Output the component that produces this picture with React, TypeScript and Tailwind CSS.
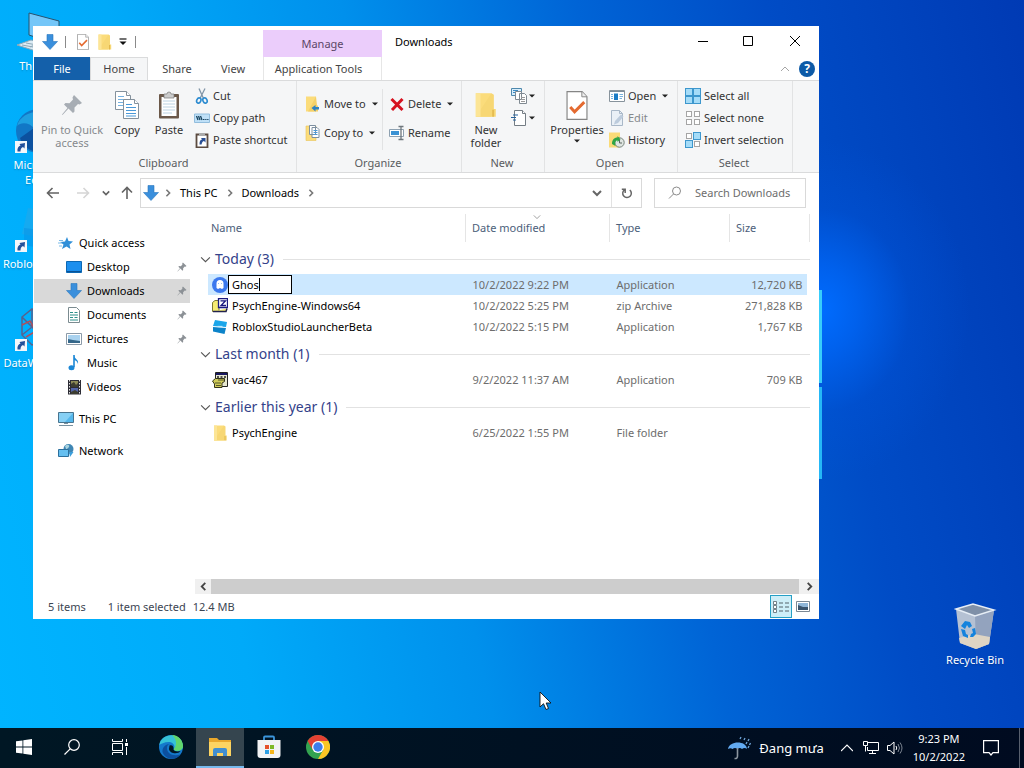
import { ReactNode } from "react";
import clsx from "clsx";

type IconProps = { className?: string };

/* ---------- shared glyphs ---------- */

function Caret({ className }: IconProps) {
  return (
    <svg className={clsx("h-[4px] w-[6px] shrink-0", className)} viewBox="0 0 6 4">
      <path d="M0 .5h6L3 3.5z" fill="#222" />
    </svg>
  );
}

function Chevron({ className, dir = "down" }: IconProps & { dir?: "down" | "up" | "left" | "right" }) {
  const paths = {
    down: "M1 3l4 4 4-4",
    up: "M1 7l4-4 4 4",
    left: "M7 1L3 5l4 4",
    right: "M3 1l4 4-4 4",
  };
  return (
    <svg className={clsx("shrink-0", className)} viewBox="0 0 10 10" fill="none" stroke="currentColor">
      <path d={paths[dir]} />
    </svg>
  );
}

function DownloadArrow({ className }: IconProps) {
  return (
    <svg className={clsx("h-4 w-4 shrink-0", className)} viewBox="0 0 16 16">
      <path d="M5 .5h6v7h4.500L8 15.500.5 7.500H5z" fill="#3a8fdc" stroke="#2a77be" strokeWidth=".6" />
    </svg>
  );
}

function FolderIcon({ className }: IconProps) {
  return (
    <svg className={clsx("shrink-0", className)} viewBox="0 0 14 16">
      <path d="M.5.5h10v15H.5z" fill="#fbdc7b" />
      <path d="M10.500.5l1.500 1v9h1.200v5H.5z" fill="#f7d774" />
      <path d="M.5.5h3v15h-3z" fill="#fce596" />
      <path d="M11.500 11v4.500" stroke="#e2b84c" />
    </svg>
  );
}

function Pin({ className }: IconProps) {
  return (
    <svg className={clsx("shrink-0", className)} viewBox="0 0 22 22" fill="currentColor">
      <path d="M13 1l8 8-2.500 1.500-1.500-.5-3.500 3.500v4L12 19l-4.500-4.500L1.500 21 1 20.500l5.500-6.500L3 10.500 4.500 9l4 .2L12 5.500 11.500 3.500z" />
    </svg>
  );
}

function CheckPage({ className }: IconProps) {
  return (
    <svg className={clsx("shrink-0", className)} viewBox="0 0 22 30">
      <path d="M.7.700h15.500L21.300 6v23.300H.7z" fill="#fff" stroke="#858585" strokeWidth="1.200" />
      <path d="M16 .7V6h5.300" fill="#eee" stroke="#858585" strokeWidth="1" />
      <path d="M4 16.500l4.500 5 10-10" fill="none" stroke="#e46a30" strokeWidth="3" />
    </svg>
  );
}

/* ---------- ribbon icons ---------- */

function CopyIcon() {
  return (
    <svg className="h-7 w-6" viewBox="0 0 24 28" fill="#fff" stroke="#84919c">
      <path d="M.5.5h11l4 4v14H.5z" />
      <path d="M11.500.5v4h4" />
      <path d="M3 5.500h6M3 8.500h10M3 11.500h10M3 14.500h10" stroke="#75b1e0" />
      <path d="M8.500 8.500h11l4 4v15h-15z" />
      <path d="M19.500 8.500v4h4" />
      <path d="M11 13.500h6M11 16.500h10M11 19.500h10M11 22.500h10M11 25h10" stroke="#4b99d8" />
    </svg>
  );
}

function PasteIcon() {
  return (
    <svg className="h-7 w-[22px]" viewBox="0 0 22 28">
      <rect x="1" y="3" width="20" height="24.500" rx="1" fill="#6b5849" />
      <path d="M3.500 6h15v19h-15z" fill="#fff" />
      <path d="M5 10h12M5 13h12M5 16h12M5 19h12M5 22h9" stroke="#bcd3e2" />
      <path d="M6 3h3a2 2 0 0 1 4 0h3v4H6z" fill="#ccc" stroke="#777" strokeWidth=".7" />
    </svg>
  );
}

function CutIcon() {
  return (
    <svg className="h-4 w-4" viewBox="0 0 16 16" fill="none">
      <path d="M5 .5l4.500 10M11 .5L6 10.500" stroke="#8296a8" strokeWidth="1.300" />
      <ellipse cx="4.800" cy="12.500" rx="2" ry="2.700" stroke="#2c8bd0" strokeWidth="1.600" transform="rotate(25 4.800 12.500)" />
      <ellipse cx="11" cy="12.500" rx="2" ry="2.700" stroke="#2c8bd0" strokeWidth="1.600" transform="rotate(-25 11 12.500)" />
    </svg>
  );
}

function CopyPathIcon() {
  return (
    <svg className="h-4 w-4" viewBox="0 0 16 16" fill="none">
      <path d="M.5 4h15v8.500H.5z" fill="#bfe0f7" stroke="#92bddd" />
      <path d="M2.500 6l1.500 4M4.500 6L6 10M6.500 6L8 10" stroke="#17435f" strokeWidth="1.300" />
      <path d="M9 9.500h1.500M11.200 9.500h1.300M13.200 9.500h1.300" stroke="#17435f" />
    </svg>
  );
}

function PasteShortcutIcon() {
  return (
    <svg className="h-4 w-4" viewBox="0 0 16 16">
      <path d="M2.500 2.500h11v13h-11z" fill="#fff" stroke="#5c4b40" strokeWidth="1.800" />
      <path d="M5 1h6v3H5z" fill="#aaa" />
      <path d="M5.500 12.500c0-3 .5-4.500 2.500-5L7 6h4.500v4.500L10 9c-2 .5-2 2-2.500 3.500z" fill="#2a4f94" />
    </svg>
  );
}

function MoveToIcon() {
  return (
    <svg className="h-4 w-4" viewBox="0 0 16 16">
      <path d="M1 .5h10v15H1z" fill="#fbdc7b" />
      <path d="M11 .5l1 9h1v6H3z" fill="#f5d067" />
      <path d="M6.500 12l4-3v2H14v2.500h-3.500v2z" fill="#2d82c4" />
    </svg>
  );
}

function CopyToIcon() {
  return (
    <svg className="h-4 w-4" viewBox="0 0 16 16">
      <path d="M1 1h10v14.500H1z" fill="#fbdc7b" stroke="#e9c556" strokeWidth=".6" />
      <path d="M4.500.5h6v9h-6zM7 2.500h5l2 2v8H7z" fill="#fff" stroke="#7d8fa0" />
      <path d="M8.500 5.500h4M8.500 7.500h4M8.500 9.500h4" stroke="#4b99d8" />
    </svg>
  );
}

function DeleteIcon() {
  return (
    <svg className="h-4 w-4" viewBox="0 0 16 16">
      <path d="M2.500 3l11 11M13.500 3L3 14" stroke="#d6121f" strokeWidth="3" />
    </svg>
  );
}

function RenameIcon() {
  return (
    <svg className="h-4 w-4" viewBox="0 0 16 16" fill="none">
      <path d="M.5 4.500h14v7H.5z" fill="#fff" stroke="#8ea1b1" />
      <path d="M2 6h8v4H2z" fill="#3a92d4" />
      <path d="M9.500 1.500h5M9.500 14.500h5M12 1.500v13" stroke="#6f777d" strokeWidth="1.300" />
    </svg>
  );
}

function NewItemIcon() {
  return (
    <svg className="h-4 w-4" viewBox="0 0 16 16" fill="#fff" stroke="#808a92">
      <path d="M.5.5h10v7H.5z" fill="#d9eefb" stroke="#4d88ad" />
      <path d="M2 2.500h5M2 4.500h3" stroke="#3a8ac4" />
      <path d="M4.500 3.500h6v8h-6zM8.500 5.500h5l2 2v8h-7z" />
      <path d="M10 9.500h4M10 11.500h4M10 13.500h4" stroke="#999" />
    </svg>
  );
}

function EasyAccessIcon() {
  return (
    <svg className="h-4 w-4" viewBox="0 0 16 16" fill="#fff" stroke="#747d84">
      <path d="M3.500.5h8l3 3v12h-11z" />
      <path d="M11.500.5v3h3" />
      <path d="M2 5h5M0 7.500h5M2 10h3" stroke="#27639c" strokeWidth="1.200" />
    </svg>
  );
}

function OpenIcon() {
  return (
    <svg className="h-4 w-4" viewBox="0 0 16 16" fill="none">
      <path d="M.5 2.500h15v11H.5z" fill="#fff" stroke="#87939c" />
      <path d="M1 3.500h14" stroke="#7c8c98" />
      <path d="M5 5.500h4v6.500H5z" fill="#1b7cc5" />
      <path d="M2 6.500h2M2 8.500h2M2 10.500h2M10.500 6.500H14M10.500 8.500H14M10.500 10.500H13" stroke="#79b3dd" />
    </svg>
  );
}

function EditIcon() {
  return (
    <svg className="h-4 w-4" viewBox="0 0 16 16">
      <path d="M2.500.5h8l3 3v12h-11z" fill="#eaf0f6" stroke="#a9b8c8" />
      <path d="M10.500.5v3h3" fill="none" stroke="#a9b8c8" />
      <path d="M6 11l6-6.500 2.500 2L9 13l-4 1.500z" fill="#bccbdc" />
    </svg>
  );
}

function HistoryIcon() {
  return (
    <svg className="h-4 w-4" viewBox="0 0 16 16">
      <path d="M0 .5h11v15H0z" fill="#fadb78" />
      <circle cx="10.500" cy="10.500" r="4.700" fill="#dfe5e1" stroke="#77837c" />
      <path d="M10.500 8v3h2.500" fill="none" stroke="#5a6761" />
      <path d="M3 12c0-4 2-6.500 5.500-6.500V4l3 3.200-3 2.800V8.500C6 8.500 6 11 6.500 14z" fill="#2fa545" />
    </svg>
  );
}

function SelectIcon({ kind }: { kind: "all" | "none" | "invert" }) {
  const on = { fill: "#a5dcf8", stroke: "#3d97cd" };
  const off = { fill: "#fff", stroke: "#a5a5a5" };
  const cells: [number, number, boolean][] = [
    [0, 0, kind === "all"],
    [8, 0, kind !== "none"],
    [0, 8, kind !== "none"],
    [8, 8, kind === "all"],
  ];
  return (
    <svg className="h-4 w-4" viewBox="0 0 16 16">
      {cells.map(([x, y, sel]) =>
        sel ? (
          <rect key={`${x}-${y}`} x={x + 0.5} y={y + 0.5} width="7" height="7" {...on} />
        ) : (
          <rect key={`${x}-${y}`} x={x + 1.5} y={y + 1.5} width="5" height="5" {...off} />
        ),
      )}
    </svg>
  );
}

/* ---------- ribbon ---------- */

function BigButton({ icon, children, className }: { icon: ReactNode; children: ReactNode; className?: string }) {
  return (
    <button className={clsx("flex flex-col items-center gap-1 leading-[13px]", className)}>
      <span className="flex h-7 items-center">{icon}</span>
      <span>{children}</span>
    </button>
  );
}

function SmallButton({ icon, label, caret, muted }: { icon: ReactNode; label: string; caret?: boolean; muted?: boolean }) {
  return (
    <button className={clsx("flex h-[22px] items-center gap-[3px] whitespace-nowrap", muted && "text-[#85898d]")}>
      {icon}
      <span>{label}</span>
      {caret && <Caret className="ml-[3px]" />}
    </button>
  );
}

function Group({ label, className, children }: { label: string; className: string; children: ReactNode }) {
  return (
    <div className={clsx("flex shrink-0 flex-col border-r border-[#e2e3e4]", className)}>
      <div className="flex h-[73px] pt-1">{children}</div>
      <div className="pr-[2px] text-center leading-[17px] text-[#5a5c5e]">{label}</div>
    </div>
  );
}

function Ribbon() {
  return (
    <div className="flex h-[93px] shrink-0 overflow-hidden border-y border-[#dadbdc] bg-[#f5f6f7] text-[#333]">
      <Group label="Clipboard" className="w-[264px]">
        <BigButton className="ml-[6px] w-[66px] pt-[6px] text-[#85898d]" icon={<Pin className="h-[22px] w-[22px] text-[#a7adb4]" />}>
          Pin to Quick access
        </BigButton>
        <BigButton className="ml-px w-[42px] pt-[6px]" icon={<CopyIcon />}>
          Copy
        </BigButton>
        <BigButton className="w-[42px] pt-[6px]" icon={<PasteIcon />}>
          Paste
        </BigButton>
        <div className="ml-1 flex flex-col">
          <SmallButton icon={<CutIcon />} label="Cut" />
          <SmallButton icon={<CopyPathIcon />} label="Copy path" />
          <SmallButton icon={<PasteShortcutIcon />} label="Paste shortcut" />
        </div>
      </Group>
      <Group label="Organize" className="w-[165px]">
        <div className="flex w-[85px] flex-col gap-[7px] pt-2 pl-2">
          <SmallButton icon={<MoveToIcon />} label="Move to" caret />
          <SmallButton icon={<CopyToIcon />} label="Copy to" caret />
        </div>
        <div className="my-1 flex flex-col gap-[7px] border-l border-[#e2e3e4] pt-1 pl-[6px]">
          <SmallButton icon={<DeleteIcon />} label="Delete" caret />
          <SmallButton icon={<RenameIcon />} label="Rename" />
        </div>
      </Group>
      <Group label="New" className="w-[83px]">
        <BigButton className="ml-[3px] w-[42px] pt-[6px]" icon={<FolderIcon className="h-[28px] w-[22px]" />}>
          New folder
        </BigButton>
        <div className="ml-1 flex flex-col">
          <button aria-label="New item" className="flex h-[22px] items-center gap-[2px]">
            <NewItemIcon />
            <Caret />
          </button>
          <button aria-label="Easy access" className="flex h-[22px] items-center gap-[2px]">
            <EasyAccessIcon />
            <Caret />
          </button>
        </div>
      </Group>
      <Group label="Open" className="w-[133px]">
        <BigButton className="ml-[3px] w-[58px] pt-[6px]" icon={<CheckPage className="h-[29px] w-[22px]" />}>
          Properties
          <Caret className="mx-auto mt-[3px] block" />
        </BigButton>
        <div className="ml-[3px] flex flex-col">
          <SmallButton icon={<OpenIcon />} label="Open" caret />
          <SmallButton icon={<EditIcon />} label="Edit" muted />
          <SmallButton icon={<HistoryIcon />} label="History" />
        </div>
      </Group>
      <Group label="Select" className="w-[115px]">
        <div className="ml-[7px] flex flex-col">
          <SmallButton icon={<SelectIcon kind="all" />} label="Select all" />
          <SmallButton icon={<SelectIcon kind="none" />} label="Select none" />
          <SmallButton icon={<SelectIcon kind="invert" />} label="Invert selection" />
        </div>
      </Group>
    </div>
  );
}

/* ---------- window header ---------- */

function TitleBar() {
  return (
    <div className="flex h-[31px] shrink-0 items-start">
      <div className="flex h-[31px] w-[230px] shrink-0 items-center pl-[9px]">
        <DownloadArrow />
        <span className="ml-[7px] h-3 w-px bg-[#8a8a8a]" />
        <button aria-label="Properties" className="ml-[11px]">
          <CheckPage className="h-4 w-3" />
        </button>
        <button aria-label="New folder" className="ml-[9px]">
          <FolderIcon className="h-4 w-[14px]" />
        </button>
        <button aria-label="Customize toolbar" className="ml-[7px]">
          <svg className="h-2 w-2" viewBox="0 0 8 8">
            <path d="M.5 1h7" stroke="#111" strokeWidth="1.200" />
            <path d="M.5 3.500h7L4 7z" fill="#111" />
          </svg>
        </button>
        <span className="ml-2 h-3 w-px bg-[#8a8a8a]" />
      </div>
      <div className="mt-1 flex h-[27px] w-[119px] shrink-0 items-center justify-center bg-[#ebcdfb] text-[#5b4666]">Manage</div>
      <h1 className="flex h-[31px] flex-1 items-center pl-[13px] text-black">Downloads</h1>
      <button aria-label="Minimize" className="flex h-[30px] w-11 items-center justify-center">
        <svg className="h-[10px] w-[10px]" viewBox="0 0 10 10" stroke="#000">
          <path d="M0 5.500h10" />
        </svg>
      </button>
      <button aria-label="Maximize" className="flex h-[30px] w-[46px] items-center justify-center">
        <svg className="h-[10px] w-[10px]" viewBox="0 0 10 10" fill="none" stroke="#000">
          <path d="M.5.5h9v9h-9z" />
        </svg>
      </button>
      <button aria-label="Close" className="flex h-[30px] w-12 items-center justify-center">
        <svg className="h-[10px] w-[10px]" viewBox="0 0 10 10" stroke="#000">
          <path d="M0 0l10 10M10 0L0 10" />
        </svg>
      </button>
    </div>
  );
}

function TabRow() {
  return (
    <div className="flex h-[23px] shrink-0 text-[#444]">
      <button className="ml-px w-[56px] bg-[#1460aa] text-white">File</button>
      <button className="-mb-px w-[58px] border border-b-0 border-[#dadbdc] bg-[#f5f6f7] pb-[2px]">Home</button>
      <button className="w-[58px]">Share</button>
      <button className="w-[54px]">View</button>
      <button className="ml-[3px] w-[119px] border-x border-[#e6e6e6] pr-2">Application Tools</button>
      <div className="flex flex-1 items-center justify-end gap-[9px] pr-1">
        <Chevron dir="up" className="h-[10px] w-[10px] text-[#a5a5a5]" />
        <button aria-label="Help" className="h-4 w-4 rounded-full bg-[#0d5aa7] text-[12px] leading-4 font-bold text-white">
          ?
        </button>
      </div>
    </div>
  );
}

function Arrow({ dir, className }: IconProps & { dir: "left" | "right" | "up" }) {
  const paths = {
    left: "M13 7H1.500M6.500 2l-5 5 5 5",
    right: "M1 7h11.500M7.500 2l5 5-5 5",
    up: "M7 13V2M2 6.500l5-5 5 5",
  };
  return (
    <svg className={clsx("h-[14px] w-[14px] shrink-0", className)} viewBox="0 0 14 14" fill="none" stroke="currentColor" strokeWidth="1.600">
      <path d={paths[dir]} />
    </svg>
  );
}

function AddressRow() {
  return (
    <div className="flex shrink-0 items-center pt-[5px] pr-[13px] text-black">
      <nav className="flex w-[107px] shrink-0 items-center pl-[13px] text-[#636363]">
        <button aria-label="Back" className="text-[#636363]"><Arrow dir="left" /></button>
        <button aria-label="Forward" className="ml-4 text-[#d5d5d5]"><Arrow dir="right" /></button>
        <button aria-label="Recent locations" className="ml-3 text-[#636363]"><Chevron className="h-2 w-2 stroke-2" /></button>
        <button aria-label="Up" className="ml-[10px] text-[#636363]"><Arrow dir="up" /></button>
      </nav>
      <div className="flex h-[30px] flex-1 items-center border border-[#d9d9d9] pl-[2px]">
        <DownloadArrow />
        <Chevron dir="right" className="ml-[5px] h-2 w-2 stroke-2 text-[#777]" />
        <a href="#this-pc" className="ml-2">This PC</a>
        <Chevron dir="right" className="ml-2 h-2 w-2 stroke-2 text-[#777]" />
        <a href="#downloads" className="ml-2">Downloads</a>
        <Chevron dir="right" className="ml-2 h-2 w-2 stroke-2 text-[#777]" />
        <button aria-label="Previous locations" className="mr-[9px] ml-auto">
          <Chevron className="h-[10px] w-[10px] stroke-2 text-[#666]" />
        </button>
        <button aria-label="Refresh" className="flex h-full w-[30px] items-center justify-center border-l border-[#e2e2e2]">
          <svg className="h-3 w-3" viewBox="0 0 12 12" fill="none" stroke="#666" strokeWidth="1.500">
            <path d="M8.800 3A4.300 4.300 0 1 1 3.500 2.800M.8 2.300h3.400V6" />
          </svg>
        </button>
      </div>
      <label className="ml-3 flex h-[30px] w-[152px] shrink-0 items-center border border-[#d9d9d9] pl-[13px]">
        <svg className="h-[14px] w-[14px] shrink-0" viewBox="0 0 14 14" fill="none" stroke="#8a8a8a">
          <circle cx="8.500" cy="5" r="4" />
          <path d="M5.500 8L1 12.500" />
        </svg>
        <input
          aria-label="Search Downloads"
          placeholder="Search Downloads"
          className="ml-[13px] w-full min-w-0 outline-none placeholder:text-[#6d6d6d] placeholder:opacity-100"
        />
      </label>
    </div>
  );
}

/* ---------- sidebar ---------- */

const sideIcons: Record<string, ReactNode> = {
  "Quick access": (
    <>
      <path d="M9 2l1.500 4 4.500.5-3.500 3 1 4.500-4-2.500L4 14l1.500-4.500L2 7l5-.5z" fill="#2f8fd8" />
      <path d="M1 5.500h4M0 8h4M1 11h3" stroke="#7bbbe8" />
    </>
  ),
  Desktop: (
    <>
      <path d="M.5 2.500h15v11H.5z" fill="#1c8fee" stroke="#0c68b4" />
      <path d="M1 12.500h14" stroke="#0a5296" />
    </>
  ),
  Documents: (
    <>
      <path d="M2.500.5h8l3 3v12h-11z" fill="#fff" stroke="#7b8b90" />
      <path d="M4 5.500h3M8.500 5.500h3M4 8h8M4 10.500h3M8.500 10.500h3M4 13h8" stroke="#2c8f8a" />
    </>
  ),
  Pictures: (
    <>
      <path d="M.5 2.500h15v11H.5z" fill="#fff" stroke="#8b9aa8" />
      <path d="M2 4h12v8H2z" fill="#a9d2ef" />
      <path d="M2 8l5 1 7 1v2H2z" fill="#35678a" />
    </>
  ),
  Music: (
    <>
      <path d="M8 0v12" stroke="#1b87d6" strokeWidth="1.600" />
      <ellipse cx="5.500" cy="12.700" rx="3" ry="2.500" fill="#1b87d6" />
      <path d="M8 0c0 4 5 4 4 9-.5-2.500-2-3.500-4-4z" fill="#1b87d6" />
    </>
  ),
  Videos: (
    <>
      <path d="M2 1h13v14.500H2z" fill="#2c2c35" />
      <path d="M5 2h7v6H5z" fill="#8d8b58" />
      <path d="M5 9h7v6H5z" fill="#5264a8" />
      <path d="M5 5l3-2 2 3 2-2v4H5zM5 13l4-2 3 2v2H5z" fill="#3d3d30" />
      <path d="M3.500 1v15M13.500 1v15" stroke="#e6e6e6" strokeDasharray="1.500 1.500" />
    </>
  ),
  "This PC": (
    <>
      <path d="M.5 1.500h15v10H.5z" fill="#54b7ec" stroke="#48748f" />
      <path d="M1 2h14L7 11H1z" fill="#86d0f5" />
      <path d="M1 14.500h14M6 12.500h4" stroke="#78909f" />
    </>
  ),
  Network: (
    <>
      <circle cx="10.500" cy="6" r="5" fill="#3f86b4" />
      <path d="M7 3c3-3 6 0 3 2s1 3-1 4z" fill="#a9d3df" />
      <path d="M.5 6.500h10v7H.5z" fill="#65bff0" stroke="#2c6f9c" />
      <path d="M11 9h4.500L12 14z" fill="#3b9edb" />
    </>
  ),
};

const places = [
  { label: "Quick access", root: true },
  { label: "Desktop", pinned: true },
  { label: "Downloads", pinned: true, active: true },
  { label: "Documents", pinned: true },
  { label: "Pictures", pinned: true },
  { label: "Music" },
  { label: "Videos" },
  { label: "This PC", root: true, spaced: true },
  { label: "Network", root: true, spaced: true },
];

function Sidebar() {
  return (
    <ul className="w-[157px] shrink-0 pt-[23px] pl-px">
      {places.map((p) => (
        <li key={p.label} className={clsx(p.spaced && "mt-2")}>
          <a
            href="#"
            className={clsx("flex h-6 items-center gap-[5px] pr-[3px] text-black", p.root ? "pl-6" : "pl-8", p.active && "bg-[#d9d9d9]")}
          >
            {p.active ? (
              <DownloadArrow />
            ) : (
              <svg className="h-4 w-4 shrink-0" viewBox="0 0 16 16" fill="none">
                {sideIcons[p.label]}
              </svg>
            )}
            <span className="flex-1 whitespace-nowrap">{p.label}</span>
            {p.pinned && <Pin className="h-[10px] w-[10px] text-[#8c9196]" />}
          </a>
        </li>
      ))}
    </ul>
  );
}

/* ---------- file list ---------- */

function FileIcon({ kind }: { kind: string }) {
  if (kind === "folder") return <FolderIcon className="ml-px h-4 w-[15px]" />;
  return (
    <svg className="h-4 w-4 shrink-0" viewBox="0 0 16 16" fill="none">
      {kind === "ghost" && (
        <>
          <circle cx="8" cy="8" r="8" fill="#3b78ee" />
          <path d="M4.500 11V6.500a3.500 3.500 0 0 1 7 0V11l-1.500 1-2-1-2 1z" fill="#fff" />
          <path d="M6.500 6v1M9.500 6v1" stroke="#9dbcf6" />
        </>
      )}
      {kind === "zip" && (
        <>
          <path d="M.5 4.500L3 2.500h4v11H.5z" fill="#f6ec72" stroke="#7d7a30" />
          <path d="M1 13.500h13l1-3" fill="#f6ec72" stroke="#22224e" strokeWidth="1.500" />
          <path d="M6.500.5h9v9h-9z" fill="#fff" stroke="#1a1a80" strokeWidth="1.300" />
          <path d="M8.500 2.800h5L9 7.500h5" stroke="#1a1a80" strokeWidth="1.300" />
        </>
      )}
      {kind === "roblox" && (
        <>
          <path d="M3 1l12 2-1 5L1 7z" fill="#1ba6ea" />
          <path d="M1 8l13 1-1.500 6L1 12.500z" fill="#0c83c9" />
          <path d="M5.500 7.500h5" stroke="#bdeaff" strokeWidth="1.300" />
        </>
      )}
      {kind === "installer" && (
        <>
          <path d="M3.500.5h12v14h-12z" fill="#e6e7d0" stroke="#222" />
          <path d="M4 1h11v2H4z" fill="#181860" />
          <path d="M5 5h2M8.500 5h2M12 5h2" stroke="#222" strokeWidth="1.500" />
          <path d="M.5 9l3-2.500h9v3L10 11v4.500H2.500V12z" fill="#d0cc5a" stroke="#36361c" />
          <path d="M3 11h6M6 8h6M4 13.500h5" stroke="#55562b" />
        </>
      )}
    </svg>
  );
}

const groups = [
  {
    title: "Today (3)",
    files: [
      { name: "Ghos", icon: "ghost", date: "10/2/2022 9:22 PM", type: "Application", size: "12,720 KB", editing: true },
      { name: "PsychEngine-Windows64", icon: "zip", date: "10/2/2022 5:25 PM", type: "zip Archive", size: "271,828 KB" },
      { name: "RobloxStudioLauncherBeta", icon: "roblox", date: "10/2/2022 5:15 PM", type: "Application", size: "1,767 KB" },
    ],
  },
  {
    title: "Last month (1)",
    files: [{ name: "vac467", icon: "installer", date: "9/2/2022 11:37 AM", type: "Application", size: "709 KB" }],
  },
  {
    title: "Earlier this year (1)",
    files: [{ name: "PsychEngine", icon: "folder", date: "6/25/2022 1:55 PM", type: "File folder", size: "" }],
  },
];

function FileTable() {
  return (
    <table className="w-full table-fixed border-collapse text-left text-[#6d6d6d]">
      <colgroup>
        <col className="w-[13px]" />
        <col />
        <col className="w-[144px]" />
        <col className="w-[120px]" />
        <col className="w-[77px]" />
        <col className="w-[3px]" />
      </colgroup>
      <thead>
        <tr className="h-[28px] text-[#4c607a]">
          <td />
          <th className="pl-[3px] font-normal">Name</th>
          <th className="relative border-l border-[#e5e5e5] pl-[6px] font-normal">
            Date modified
            <Chevron className="absolute -top-px left-[67px] h-2 w-2 text-[#888]" />
          </th>
          <th className="border-l border-[#e5e5e5] pl-[6px] font-normal">Type</th>
          <th className="border-l border-[#e5e5e5] pl-[6px] font-normal">Size</th>
          <td className="border-r border-[#e5e5e5]" />
        </tr>
      </thead>
      {groups.map((g) => (
        <tbody key={g.title}>
          <tr className="h-8">
            <th colSpan={6} className="p-0 font-normal">
              <div className="flex items-center pt-[2px] pl-[5px] text-[14px] leading-5 text-[#34428a]">
                <Chevron className="mr-1 h-[11px] w-[11px] text-[#555]" />
                {g.title}
                <span className="ml-[9px] h-px flex-1 bg-[#e2e2e2]" />
              </div>
            </th>
          </tr>
          {g.files.map((f) => (
            <tr key={f.name} className="h-[21px]">
              <td />
              <td className={clsx("p-0", f.editing && "bg-[#cce8ff]")}>
                <div className="flex items-center gap-1 pl-1 whitespace-nowrap text-black">
                  <FileIcon kind={f.icon} />
                  {f.editing ? (
                    <span className="relative -ml-1">
                      <input
                        aria-label="File name"
                        defaultValue={f.name}
                        className="block h-[19px] w-16 border border-black bg-white pl-[3px] caret-transparent outline-none"
                      />
                      <span className="absolute top-[3px] left-[31px] h-[13px] w-px bg-black" />
                    </span>
                  ) : (
                    <span>{f.name}</span>
                  )}
                </div>
              </td>
              <td className={clsx("p-0 pl-[7px]", f.editing && "bg-[#cce8ff]")}>{f.date}</td>
              <td className={clsx("p-0 pl-[7px]", f.editing && "bg-[#cce8ff]")}>{f.type}</td>
              <td className={clsx("p-0 pr-1 text-right whitespace-nowrap", f.editing && "bg-[#cce8ff]")}>{f.size}</td>
              <td />
            </tr>
          ))}
        </tbody>
      ))}
    </table>
  );
}

function ExplorerWindow() {
  return (
    <main className="absolute top-[26px] right-[205px] bottom-[109px] left-[33px] flex flex-col overflow-hidden bg-white">
      <TitleBar />
      <TabRow />
      <Ribbon />
      <AddressRow />
      <div className="flex min-h-0 flex-1">
        <Sidebar />
        <div className="flex min-w-0 flex-1 flex-col pl-[5px]">
          <div className="min-h-0 flex-1 overflow-hidden pt-[6px] pr-[9px]">
            <FileTable />
          </div>
          <div className="flex h-[15px] shrink-0 items-center bg-[#f0f0f0] text-[#444]">
            <button aria-label="Scroll left" className="flex w-4 justify-center">
              <Chevron dir="left" className="h-[9px] w-[9px] stroke-2" />
            </button>
            <span className="h-full flex-1 bg-[#cdcdcd]" />
            <button aria-label="Scroll right" className="flex w-5 justify-center">
              <Chevron dir="right" className="h-[9px] w-[9px] stroke-2" />
            </button>
          </div>
        </div>
      </div>
      <footer className="flex h-[25px] shrink-0 items-center pl-[15px] text-[#3c4552]">
        <span>5 items</span>
        <span className="ml-[22px]">1 item selected</span>
        <span className="ml-[7px]">12.4 MB</span>
        <div className="mr-[9px] ml-auto flex h-full items-center gap-1">
          <button aria-label="Details view" className="flex h-[23px] w-[22px] items-center justify-center border border-[#26a0c6] bg-[#cdeef8]">
            <svg className="h-3 w-4" viewBox="0 0 16 12" fill="none" stroke="#55626b">
              <path d="M.5.500h3v3h-3zM.5 4.500h3v3h-3zM.5 8.500h3v3h-3z" fill="#fff" strokeWidth=".8" />
              <path d="M6 2h4M12 2h4M6 6h4M12 6h4M6 10h4M12 10h4" />
            </svg>
          </button>
          <button aria-label="Thumbnail view">
            <svg className="h-[11px] w-[14px]" viewBox="0 0 14 11">
              <path d="M.5.500h13v10H.5z" fill="#fff" stroke="#7b8894" />
              <path d="M2 2h10v7H2z" fill="#8fb6d8" />
              <path d="M2 4l5 2h5v3H2z" fill="#39536b" />
            </svg>
          </button>
        </div>
      </footer>
    </main>
  );
}

/* ---------- desktop ---------- */

function ShortcutBadge() {
  return (
    <svg className="absolute bottom-[2px] left-[1px] h-3 w-3" viewBox="0 0 12 12">
      <path d="M0 0h12v12H0z" fill="#f4f7fb" />
      <path d="M2.500 10.500c-.5-3.500 1-5.500 3-6L4.500 3 10 2 9.500 7.500 8 6C6 6.500 5.500 8.500 5.500 10.500z" fill="#23509a" />
    </svg>
  );
}

function Shortcut({ label, badge, children }: { label: string; badge?: boolean; children: ReactNode }) {
  return (
    <a href="#" className="flex h-[99px] w-[76px] flex-col items-center gap-[2px] text-center leading-[15px] text-white text-shadow-sm">
      <span className="relative block h-12 w-12">
        <svg className="h-12 w-12" viewBox="0 0 48 48">
          {children}
        </svg>
        {badge && <ShortcutBadge />}
      </span>
      {label}
    </a>
  );
}

function Desktop() {
  return (
    <div className="relative min-h-0 flex-1 overflow-hidden bg-[radial-gradient(ellipse_150px_170px_at_820px_310px,rgb(0_108_255)_0%,rgb(0_104_250/0.75)_25%,rgb(0_90_230/0.25)_60%,rgb(0_80_215/0)_100%),linear-gradient(78deg,#00b4ff_0%,#00aaf9_22%,#0090ec_42%,#0064d6_62%,#004cc6_78%,#003ab4_100%)]">
      <div className="absolute top-[8px] left-0 flex flex-col">
        <Shortcut label="This PC">
          <path d="M15 5l30 8v24l-30-10z" fill="#74c6f8" stroke="#27526f" />
          <path d="M3 37l14-5 22 6-14 6z" fill="#dcebf4" stroke="#8fa9b8" />
          <path d="M8 37l22 4M12 35l22 4M16 39l9-4" stroke="#8fa9b8" />
        </Shortcut>
        <Shortcut label="Microsoft Edge" badge>
          <circle cx="24" cy="24" r="22" fill="#1177c6" />
          <path d="M3 19C7 2 40-3 46 22c-6-12-22-10-25 0-6-7-14-7-18-3z" fill="#1f9fe0" />
          <path d="M20 21c-2 12 5 20 18 18-10 10-28 6-32-8z" fill="#0c519f" />
        </Shortcut>
        <Shortcut label="Roblox Player" badge>
          <path d="M14 2l30 4-4 28-32-6z" fill="#15aaf0" />
          <path d="M10 22l32 4-4 18-28-5z" fill="#0890e4" opacity=".5" />
        </Shortcut>
        <Shortcut label="DataWrapper" badge>
          <g fill="none" stroke="#56638f" strokeWidth="1.500">
            <path d="M8 12l10-8 12 8 10 10-8 14-14 4-10-10zM8 12l10 10 12-10M18 22l-10 8M18 22l14 14M18 4v18" />
            <path d="M8 20l8-4 6 10 14-2M12 32l10-6 6 10" stroke="#b0505c" />
          </g>
        </Shortcut>
      </div>
      {/* light beam of the wallpaper's window pane */}
      <div className="absolute top-[290px] left-[819px] h-[93px] w-[3px] bg-[#38cdfa]" />
      <div className="absolute top-[387px] left-[819px] h-[92px] w-[3px] bg-[#25b8f6]" />
      <ExplorerWindow />
      <a
        href="#"
        className="absolute right-[11px] bottom-[61px] flex w-[76px] flex-col items-center gap-[2px] leading-[15px] whitespace-nowrap text-white text-shadow-sm"
      >
        <svg className="h-12 w-12" viewBox="0 0 48 48">
          <path d="M5 7l4 34 16 6 13-5 5-34-19 5z" fill="#b5c1d3" />
          <path d="M24 13l1 34 13-5 5-34z" fill="#93a3be" />
          <path d="M8 36l15-4 16 3-1 7-13 5-16-6z" fill="#dfd5c4" />
          <path d="M5 7l17-5 21 6-19 6z" fill="#7f90a8" stroke="#e6edf5" strokeWidth="1.500" />
          <path d="M10 24l4-5 5 1 2 4-3 2-2-3-2 4zM10 27l4 1 1 4 2 1v3l-5-2zM19 35l1-3 2-1-1-4 3-1 1 6-3 3z" fill="#1583dd" />
        </svg>
        Recycle Bin
      </a>
      <svg className="absolute top-[691px] left-[539px] h-[20px] w-[13px]" viewBox="0 0 13 20">
        <path d="M1 1v15l3.500-3.300L7 18.500l2.500-1L7.200 12H12z" fill="#fff" stroke="#111" strokeWidth=".9" />
      </svg>
    </div>
  );
}

/* ---------- taskbar ---------- */

function TaskButton({ label, active, children }: { label: string; active?: boolean; children: ReactNode }) {
  return (
    <button
      aria-label={label}
      className={clsx("flex h-10 w-12 items-center justify-center border-b-2", active ? "border-[#76b9ed] bg-[#35454f]" : "border-transparent")}
    >
      {children}
    </button>
  );
}

function Taskbar() {
  return (
    <footer className="flex h-10 shrink-0 items-center bg-linear-to-r from-[#001724] to-[#000b20] text-white">
      <TaskButton label="Start">
        <svg className="h-4 w-4" viewBox="0 0 16 16" fill="#fff">
          <path d="M0 2.300l6.500-.9v6.200H0zM7.300 1.300L16 0v7.600H7.300zM0 8.400h6.500v6.200L0 13.700zM7.300 8.400H16V16l-8.700-1.300z" />
        </svg>
      </TaskButton>
      <TaskButton label="Search">
        <svg className="h-4 w-4" viewBox="0 0 16 16" fill="none" stroke="#fff" strokeWidth="1.200">
          <circle cx="10" cy="6" r="5.300" />
          <path d="M6.200 9.800L.5 15.500" />
        </svg>
      </TaskButton>
      <TaskButton label="Task View">
        <svg className="h-4 w-4" viewBox="0 0 16 16" fill="none" stroke="#fff">
          <path d="M.5 0v2.500h10V0M.5 16v-2.500h10V16M.5 4.500h10v7H.5zM14.500 0v3M14.500 8v8" />
          <path d="M13 4h3v3h-3z" fill="#fff" stroke="none" />
        </svg>
      </TaskButton>
      <div className="ml-[3px] flex gap-px">
        <TaskButton label="Microsoft Edge">
          <svg className="h-6 w-6" viewBox="0 0 24 24">
            <circle cx="12" cy="12" r="12" fill="#1479cc" />
            <path d="M.3 10C2-2 22-4 24 11c0 5-7 6-9.500 3.500C17 11 14 7 10 7 5 7 2 9 .3 10z" fill="#36c2d7" />
            <path d="M13 0c7 0 11 6 11 11 0 5-7 6-9.500 3.500C19 10 17 3 13 0z" fill="#61d66c" />
            <path d="M8 13c0 6 6 8.500 13.500 6.500C17 26 6 25 3.500 17 3 12 7 9 11 9c-2 0-3 2-3 4z" fill="#0c4f9e" />
            <path d="M10.500 10.500c3-1 4.500 1.500 4 4 1 2.500 5 2 7 1.500-2 3.500-11 3-11.500-2z" fill="#001724" />
          </svg>
        </TaskButton>
        <TaskButton label="File Explorer" active>
          <svg className="h-5 w-6" viewBox="0 0 24 20">
            <path d="M1 1h8l2 2h12v4H1z" fill="#e9a82c" />
            <path d="M1 5h22v14H1z" fill="#fcd462" />
            <path d="M5 19v-6q0-2 2-2h10q2 0 2 2v6h-4v-3H9v3z" fill="#418fd0" />
          </svg>
        </TaskButton>
        <TaskButton label="Microsoft Store">
          <svg className="h-6 w-6" viewBox="0 0 24 24">
            <path d="M7 6V2.500Q7 1.500 8 1.500h8q1 0 1 1V6" fill="none" stroke="#3b95dc" strokeWidth="1.800" />
            <path d="M.5 5h23v15q0 3-3 3h-17q-3 0-3-3z" fill="#f1f3f5" />
            <path d="M8 10h4v4H8z" fill="#e5512b" />
            <path d="M13 10h4v4h-4z" fill="#7db928" />
            <path d="M8 15h4v4H8z" fill="#2d9fe4" />
            <path d="M13 15h4v4h-4z" fill="#f5b61c" />
          </svg>
        </TaskButton>
        <TaskButton label="Google Chrome">
          <svg className="h-6 w-6" viewBox="0 0 24 24">
            <circle cx="12" cy="12" r="12" fill="#33a350" />
            <path d="M12 6h10.400A12 12 0 0 1 12 24l5.200-9z" fill="#fbc624" />
            <path d="M1.600 6A12 12 0 0 1 22.400 6H12L6.800 15z" fill="#e34133" />
            <circle cx="12" cy="12" r="6" fill="#fff" />
            <circle cx="12" cy="12" r="4.700" fill="#3d7deb" />
          </svg>
        </TaskButton>
      </div>
      <div className="ml-auto flex h-full items-center">
        <button className="flex items-center gap-2 text-[13px] whitespace-nowrap">
          <svg className="h-6 w-6" viewBox="0 0 24 24" fill="none">
            <path d="M1 13C2 5 19 4 20 13q-2.500-2-5 0-2.200-2-4.500 0-2.500-2-5 0-2-1.500-4.500 0z" fill="#62aaf0" />
            <path d="M10.500 12v8q0 3-3 2.500" stroke="#8c969f" strokeWidth="1.600" />
            <path d="M13 3l1-2M17 4l1-2M21 5l1-2M19 8l1-2M22.500 9l1-2M21 12l1-2" stroke="#6fa5d8" strokeWidth="1.300" />
          </svg>
          Đang mưa
        </button>
        <button aria-label="Show hidden icons" className="ml-[17px]">
          <svg className="h-[14px] w-3" viewBox="0 0 12 14" fill="none" stroke="#fff" strokeWidth="1.200">
            <path d="M0 10l6-6 6 6" />
          </svg>
        </button>
        <button aria-label="Network" className="ml-[10px]">
          <svg className="h-4 w-4" viewBox="0 0 16 16" fill="none" stroke="#fff">
            <path d="M5 2.500h10.500v8H4.500V7M9.500 10.500v3M6 13.500h7" />
            <path d="M.5 1.500h4v4h-4zM2.500 5.500v6" />
          </svg>
        </button>
        <button aria-label="Volume" className="ml-2">
          <svg className="h-4 w-4" viewBox="0 0 16 16" fill="none" stroke="#fff">
            <path d="M.5 5.500h2.500l4-3.500v12L3 10.500H.5zM9 6q1.500 2 0 4" />
            <path d="M11 4q3 4 0 8M13 2.500q4 5.500 0 11" stroke="#7d8591" />
          </svg>
        </button>
        <div className="ml-[10px] text-center leading-[18px]">
          9:23 PM
          <br />
          10/2/2022
        </div>
        <button aria-label="Notifications" className="mr-5 ml-[18px]">
          <svg className="h-4 w-4" viewBox="0 0 16 16" fill="none" stroke="#fff" strokeWidth="1.200">
            <path d="M.6.6h14.800v12H10L8 15l-2-2.400H.6z" />
          </svg>
        </button>
        <span className="mr-1 h-full w-px bg-[#58606e]" />
      </div>
    </footer>
  );
}

export default function App() {
  return (
    <div className="flex h-screen min-w-[900px] flex-col overflow-hidden font-['Noto_Sans','Open_Sans',sans-serif] text-[11px] leading-4">
      <Desktop />
      <Taskbar />
    </div>
  );
}
